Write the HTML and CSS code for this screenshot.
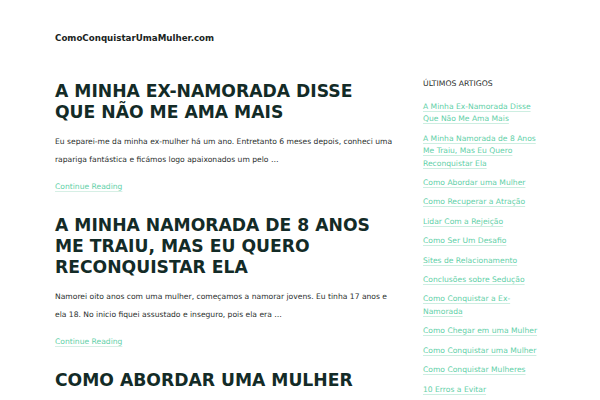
FILE: index.html
```html
<!DOCTYPE html>
<html lang="pt">
<head>
<meta charset="utf-8">
<link rel="stylesheet" href="styles.css">
</head>
<body>
<header class="site-header">
  <a class="site-title" href="#">ComoConquistarUmaMulher.com</a>
</header>
<div class="wrap">
  <main class="content">
    <article class="post">
      <h2 class="post-title">A MINHA EX-NAMORADA DISSE QUE NÃO ME AMA MAIS</h2>
      <p class="excerpt">Eu separei-me da minha ex-mulher há um ano. Entretanto 6 meses depois, conheci uma rapariga fantástica e ficámos logo apaixonados um pelo …</p>
      <a class="more" href="#">Continue Reading</a>
    </article>
    <article class="post">
      <h2 class="post-title">A MINHA NAMORADA DE 8 ANOS ME TRAIU, MAS EU QUERO RECONQUISTAR ELA</h2>
      <p class="excerpt">Namorei oito anos com uma mulher, começamos a namorar jovens. Eu tinha 17 anos e ela 18. No inicio fiquei assustado e inseguro, pois ela era …</p>
      <a class="more" href="#">Continue Reading</a>
    </article>
    <article class="post">
      <h2 class="post-title">COMO ABORDAR UMA MULHER</h2>
    </article>
  </main>
  <aside class="sidebar">
    <h3 class="widget-title">ÚLTIMOS ARTIGOS</h3>
    <ul class="recent">
      <li><a href="#">A Minha Ex-Namorada Disse Que Não Me Ama Mais</a></li>
      <li><a href="#">A Minha Namorada de 8 Anos Me Traiu, Mas Eu Quero Reconquistar Ela</a></li>
      <li><a href="#">Como Abordar uma Mulher</a></li>
      <li><a href="#">Como Recuperar a Atração</a></li>
      <li><a href="#">Lidar Com a Rejeição</a></li>
      <li><a href="#">Como Ser Um Desafio</a></li>
      <li><a href="#">Sites de Relacionamento</a></li>
      <li><a href="#">Conclusões sobre Sedução</a></li>
      <li><a href="#">Como Conquistar a Ex-Namorada</a></li>
      <li><a href="#">Como Chegar em uma Mulher</a></li>
      <li><a href="#">Como Conquistar uma Mulher</a></li>
      <li><a href="#">Como Conquistar Mulheres</a></li>
      <li><a href="#">10 Erros a Evitar</a></li>
    </ul>
  </aside>
</div>
</body>
</html>
```
FILE: styles.css
```css
html, body {
  margin: 0;
  padding: 0;
  background: #ffffff;
  font-family: "DejaVu Sans", sans-serif;
  color: #1f2a28;
  overflow: hidden;
}
a { text-decoration: none; }
.site-header {
  padding: 26px 0 0 55px;
  height: 50px;
  box-sizing: border-box;
}
.site-title {
  font-size: 8.7px;
  font-weight: bold;
  color: #1a2422;
}
.wrap {
  display: flex;
  padding-left: 55px;
  gap: 28px;
}
.content {
  width: 340px;
  flex: none;
}
.post-title {
  margin: 22px 0 0;
  font-size: 17.2px;
  line-height: 21px;
  font-weight: bold;
  color: #132b27;
}
.post:first-child .post-title { margin-top: 31px; }
.excerpt {
  margin: 10px 0 0;
  font-size: 7.6px;
  line-height: 18px;
  color: #2b2f2e;
}
.more {
  display: inline-block;
  margin-top: 13px;
  font-size: 7.6px;
  color: #5fd0a8;
  text-decoration: underline;
  text-decoration-color: #d6efe5;
  text-underline-offset: 2px;
}
.sidebar {
  width: 122px;
  flex: none;
  padding-top: 29px;
}
.widget-title {
  margin: 0 0 13px;
  font-size: 7.7px;
  font-weight: normal;
  color: #2a2f2e;
}
.recent {
  list-style: none;
  margin: 0;
  padding: 0;
}
.recent li {
  font-size: 7.6px;
  line-height: 12.4px;
  margin-bottom: 7px;
}
.recent a {
  color: #5fd0a8;
  text-decoration: underline;
  text-decoration-color: #cdeee1;
  text-underline-offset: 2px;
}
```
